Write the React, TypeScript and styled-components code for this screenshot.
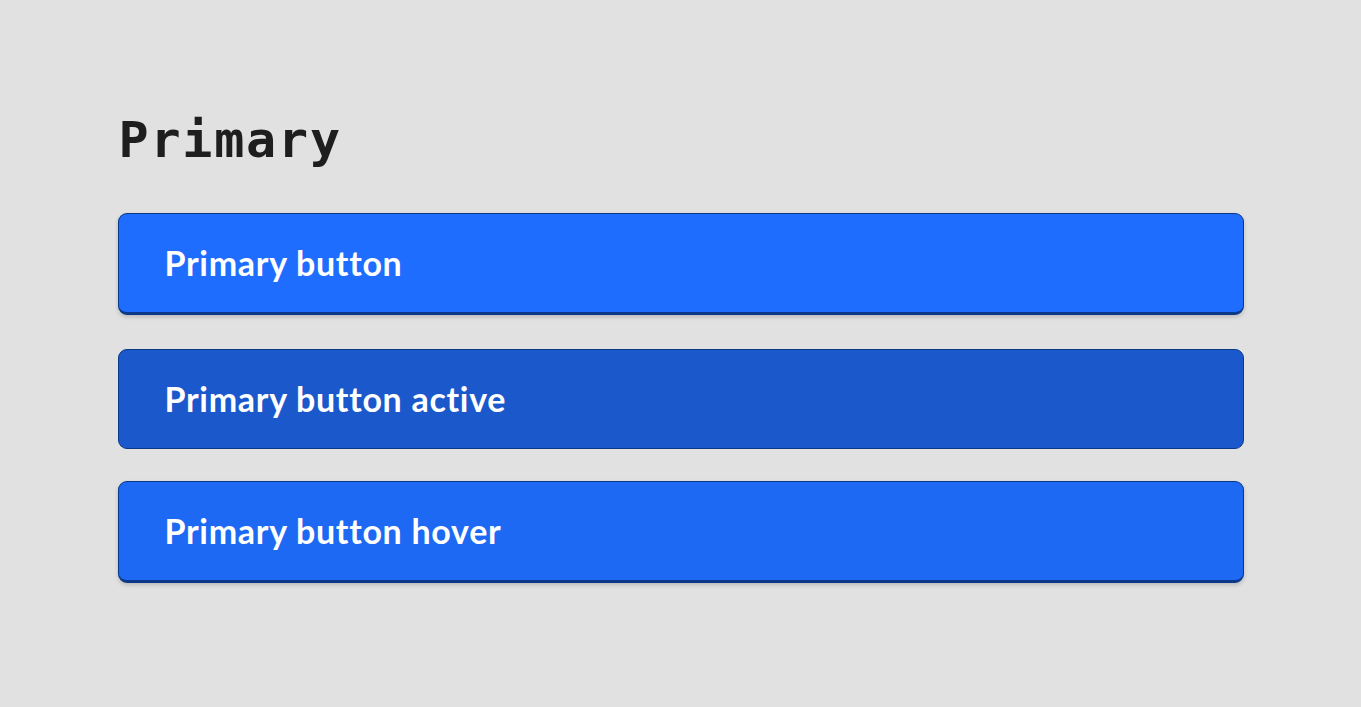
import React from "react";
import styled, { createGlobalStyle } from "styled-components";

// --- Global ---
const GlobalStyle = createGlobalStyle`
  html, body {
    margin: 0;
    padding: 0;
    background: #e1e1e1;
  }
`;

type Variant = "default" | "active" | "hover";

const palette: Record<Variant, string> = {
  default: "#1f6dff",
  active: "#1b58cc",
  hover: "#1d69f3",
};

// --- Styled Components ---
const Page = styled.div`
  min-height: 707px;
  display: flex;
  justify-content: center;
  padding-top: 110px;
  box-sizing: border-box;
`;

const Section = styled.section`
  width: 1126px;
  display: flex;
  flex-direction: column;
`;

const Title = styled.h1`
  margin: 0 0 42px 1px;
  font-family: "DejaVu Sans Mono", "Liberation Mono", monospace;
  font-size: 50px;
  font-weight: 700;
  letter-spacing: 1.8px;
  line-height: 61px;
  color: #1e1e1e;
`;

const ButtonList = styled.div`
  display: flex;
  flex-direction: column;
  gap: 32px;
`;

const Button = styled.button<{ $variant: Variant }>`
  box-sizing: border-box;
  width: 100%;
  height: ${(p) => (p.$variant === "active" ? "100px" : "102px")};
  margin-top: ${(p) => (p.$variant === "active" ? "2px" : "0")};
  padding: 0 0 2px 46px;
  display: flex;
  align-items: center;
  text-align: left;
  background: ${(p) => palette[p.$variant]};
  border: 1px solid #0c3888;
  border-bottom-width: ${(p) => (p.$variant === "active" ? "1px" : "3px")};
  border-radius: 9px;
  box-shadow: ${(p) =>
    p.$variant === "active" ? "none" : "0 2px 4px rgba(0, 0, 0, 0.18)"};
  font-family: "Lato", "Open Sans", sans-serif;
  font-size: 34px;
  font-weight: 700;
  letter-spacing: 0.7px;
  color: #ffffff;
  cursor: pointer;
`;

const buttons: { label: string; variant: Variant }[] = [
  { label: "Primary button", variant: "default" },
  { label: "Primary button active", variant: "active" },
  { label: "Primary button hover", variant: "hover" },
];

// --- Main ---
const App: React.FC = () => {
  return (
    <>
      <GlobalStyle />
      <Page>
        <Section>
          <Title>Primary</Title>
          <ButtonList>
            {buttons.map((b) => (
              <Button key={b.label} $variant={b.variant}>
                {b.label}
              </Button>
            ))}
          </ButtonList>
        </Section>
      </Page>
    </>
  );
};

export default App;
